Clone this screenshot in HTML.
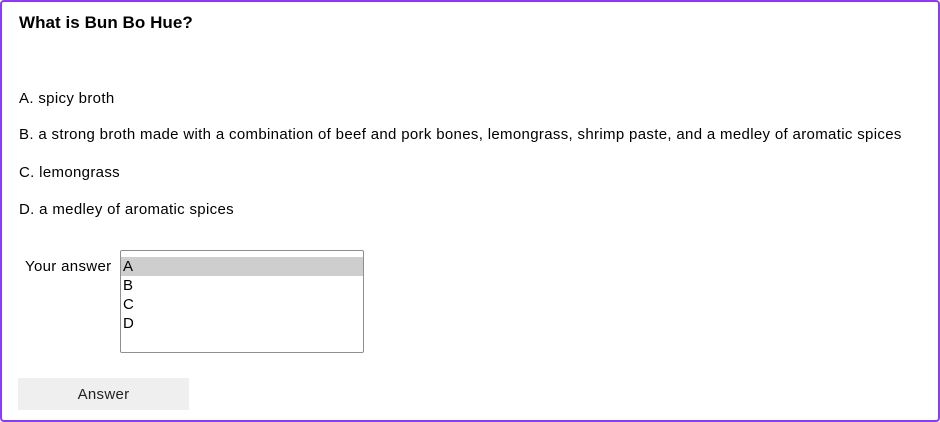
<!DOCTYPE html>
<html><head><style>
html,body{margin:0;padding:0;background:#fff}
body{width:940px;height:422px;position:relative;overflow:hidden;font-family:"Liberation Sans",Arial,sans-serif;color:#000}
.frame{position:absolute;left:0;top:0;width:936px;height:418px;border:2px solid #8a3cf0;border-radius:4px}
.t{position:absolute;left:19px;white-space:nowrap}
h1{position:absolute;left:19px;top:13px;margin:0;font-size:17px;font-weight:bold;letter-spacing:0.05px}
.o{font-size:15px;line-height:18px;letter-spacing:0.33px}
.sel{position:absolute;left:120px;top:250px;width:242px;height:101px;border:1px solid #8f8f8f;border-radius:2px;font-size:15px}
.sel div{height:19px;line-height:19px;padding-left:2px}
.sel .hl{background:#cecece;margin-top:6px}
.btn{position:absolute;left:18px;top:378px;width:171px;height:32px;background:#efefef;font-size:15px;line-height:33px;text-align:center;color:#222;letter-spacing:0.3px}
</style></head><body>
<div class="frame"></div>
<h1>What is Bun Bo Hue?</h1>
<div class="t o" style="top:90px">A. spicy broth</div>
<div class="t o" style="top:126px">B. a strong broth made with a combination of beef and pork bones, lemongrass, shrimp paste, and a medley of aromatic spices</div>
<div class="t o" style="top:164px">C. lemongrass</div>
<div class="t o" style="top:201px">D. a medley of aromatic spices</div>
<div class="t o" style="left:25px;top:258px">Your answer</div>
<div class="sel"><div class="hl">A</div><div>B</div><div>C</div><div>D</div></div>
<div class="btn">Answer</div>
</body></html>
